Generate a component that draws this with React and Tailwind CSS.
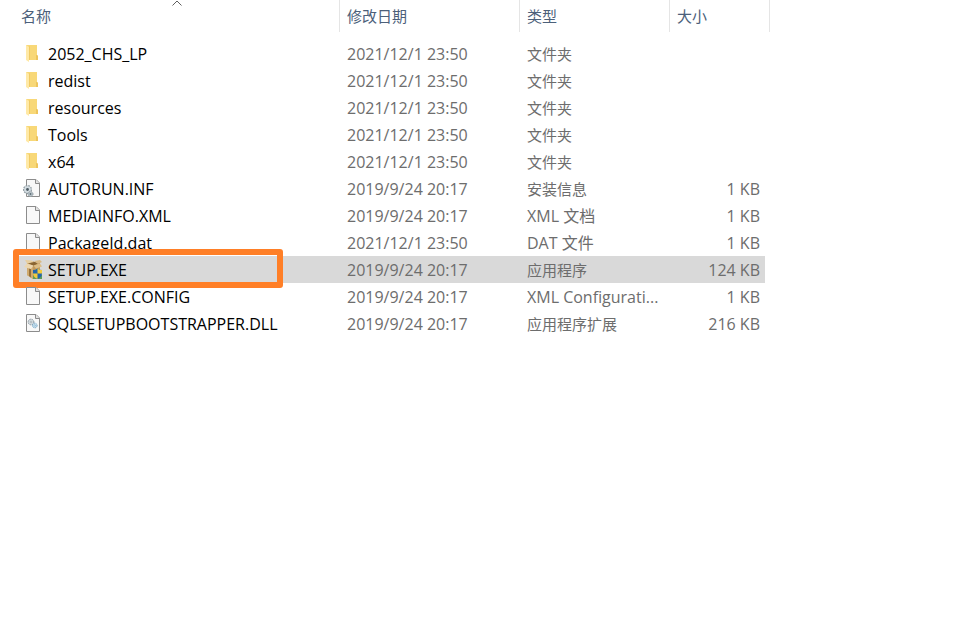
import React from 'react';

const files = [
  { name: '2052_CHS_LP', date: '2021/12/1 23:50', type: '文件夹', size: '', icon: 'folder' },
  { name: 'redist', date: '2021/12/1 23:50', type: '文件夹', size: '', icon: 'folder' },
  { name: 'resources', date: '2021/12/1 23:50', type: '文件夹', size: '', icon: 'folder' },
  { name: 'Tools', date: '2021/12/1 23:50', type: '文件夹', size: '', icon: 'folder' },
  { name: 'x64', date: '2021/12/1 23:50', type: '文件夹', size: '', icon: 'folder' },
  { name: 'AUTORUN.INF', date: '2019/9/24 20:17', type: '安装信息', size: '1 KB', icon: 'inf' },
  { name: 'MEDIAINFO.XML', date: '2019/9/24 20:17', type: 'XML 文档', size: '1 KB', icon: 'file' },
  { name: 'PackageId.dat', date: '2021/12/1 23:50', type: 'DAT 文件', size: '1 KB', icon: 'file' },
  { name: 'SETUP.EXE', date: '2019/9/24 20:17', type: '应用程序', size: '124 KB', icon: 'setup', selected: true },
  { name: 'SETUP.EXE.CONFIG', date: '2019/9/24 20:17', type: 'XML Configurati...', size: '1 KB', icon: 'file' },
  { name: 'SQLSETUPBOOTSTRAPPER.DLL', date: '2019/9/24 20:17', type: '应用程序扩展', size: '216 KB', icon: 'dll' },
];

function Page() {
  return (
    <>
      <path d="M3.5 1.5h9.500l3.500 3.500v13.500h-13z" fill="#f8f8f8" stroke="#8c8c8c" />
      <path d="M12.5 1.5v4h4" fill="#e3e3e3" stroke="#8c8c8c" />
    </>
  );
}

function FileIcon({ kind }) {
  return (
    <svg className="h-[21px] w-5 shrink-0" viewBox="0 0 20 21" aria-hidden="true">
      {kind === 'folder' && (
        <>
          <path d="M3 2h11v10l1 1v4H5z" fill="#f8d878" />
          <path d="M13 12h1l1 1v4h-2z" fill="#edc45c" />
          <path d="M6 3l1 .5v13.500H6z" fill="#f1cb66" />
          <path d="M3 2l3 2v15l-3-2z" fill="#ffe9a6" />
        </>
      )}
      {kind === 'file' && <Page />}
      {kind === 'inf' && (
        <>
          <Page />
          <circle cx="4.500" cy="11.500" r="3.800" fill="#c3ccd2" stroke="#8d999f" strokeWidth="1.500" strokeDasharray="1.6 1" />
          <circle cx="4.500" cy="11.500" r="3.200" fill="#d3dce1" />
          <circle cx="4.500" cy="11.500" r="1.400" fill="#4d5b63" />
          <circle cx="7.500" cy="16" r="2.500" fill="#b7c2c8" stroke="#8d999f" strokeDasharray="1.2 .8" />
          <circle cx="7.500" cy="16" r=".9" fill="#5d6e78" />
        </>
      )}
      {kind === 'dll' && (
        <>
          <Page />
          <circle cx="8" cy="9" r="2.8" fill="#dde4e8" stroke="#7f8d96" strokeDasharray="1.4 .6" />
          <circle cx="8" cy="9" r="1" fill="#fff" stroke="#8a969d" strokeWidth=".7" />
          <circle cx="11.8" cy="12.5" r="2.3" fill="#d5eaf7" stroke="#6a9fc0" strokeDasharray="1.2 .6" />
          <circle cx="11.8" cy="12.5" r=".8" fill="#fff" stroke="#6a9fc0" strokeWidth=".6" />
        </>
      )}
      {kind === 'setup' && (
        <>
          <path d="M4 4h13v12l-7 4-6-4z" fill="#c39a5c" />
          <path d="M4 5l6 3v12l-6-4z" fill="#d0aa6e" />
          <path d="M6 9l2 1v8.500l-2-1.500z" fill="#94703c" />
          <path d="M5 4l5-1.500 6 1.500-6 3z" fill="#8a6532" />
          <path d="M2 1l7 .5 2 1.500-7 1.500z" fill="#e8cf9f" />
          <path d="M11 2l6-1 2 2-4 2z" fill="#d9b984" />
          <path d="M4 4.500L1 8l7 2 2.500-3.500z" fill="#ecd7b0" />
          <path d="M10.500 6.500L17 4.500l2 3-6 2z" fill="#dcbd86" />
          <path d="M10 16h9v4h-9z" fill="#5c9c57" />
          <path d="M10 11q2.500 0 4.500-1.500 2 1.500 4.500 1.500v3.500q0 3.500-4.500 5.500-4.500-2-4.500-5.500z" fill="#2466ab" />
          <path d="M14.500 9.500q2 1.500 4.500 1.500v3.500h-4.500z" fill="#f2cb3d" />
          <path d="M10 14.500h4.500v5.500q-4.500-2-4.500-5.500z" fill="#f2cb3d" />
        </>
      )}
    </svg>
  );
}

const columns = [
  { label: '名称', span: 1 },
  { label: '修改日期', span: 1 },
  { label: '类型', span: 1 },
  { label: '大小', span: 2 },
];

export default function App() {
  return (
    <main className="min-h-screen overflow-x-auto bg-white pl-3.5 font-['Open_Sans','Noto_Sans_CJK_SC',sans-serif] text-base leading-[21px] text-[#6d6d6d]">
      <table className="w-[756px] table-fixed border-collapse text-left">
        <colgroup>
          <col className="w-[326px]" />
          <col className="w-[180px]" />
          <col className="w-[150px]" />
          <col className="w-[95px]" />
          <col className="w-[5px]" />
        </colgroup>
        <thead>
          <tr>
            {columns.map((c, i) => (
              <th key={c.label} colSpan={c.span} className="p-0 pb-2 font-normal" aria-sort={i === 0 ? 'ascending' : undefined}>
                <button type="button" className="relative block h-8 w-full border-r border-[#e5e5e5] pl-[7px] text-left text-[15px] leading-5 text-[#4c607a]">
                  {c.label}
                  {i === 0 && (
                    <svg className="absolute left-1/2 top-0 h-2 w-2.5 -translate-x-1/2" viewBox="0 0 10 8" fill="none" stroke="#5f5f5f" aria-hidden="true">
                      <path d="M.5 5.500l4.500-4.500 4.500 4.500" />
                    </svg>
                  )}
                </button>
              </th>
            ))}
          </tr>
        </thead>
        <tbody>
          {files.map((f) => {
            const bg = f.selected ? 'bg-[#d9d9d9]' : '';
            const typeSize = /[A-Z]/.test(f.type) ? 'pt-0.5 text-base leading-[21px]' : 'text-[15px] leading-5';
            return (
              <tr key={f.name} className="h-[27px]" aria-selected={f.selected ? true : undefined}>
                <td className={`relative p-0 pl-[9px] ${bg}`}>
                  <div className="flex items-center gap-[5px] whitespace-nowrap text-black">
                    <FileIcon kind={f.icon} />
                    <span className="pt-0.5">{f.name}</span>
                  </div>
                  {f.selected && (
                    <div className="pointer-events-none absolute -left-px -top-[7px] h-[39px] w-[270px] rounded-[3px] border-[6px] border-[#ff7f27]" />
                  )}
                </td>
                <td className={`p-0 pl-[7px] pt-0.5 ${bg}`}>{f.date}</td>
                <td className={`whitespace-nowrap p-0 pl-[7px] ${typeSize} ${bg}`}>{f.type}</td>
                <td className={`p-0 pr-[5px] pt-0.5 text-right ${bg}`}>{f.size}</td>
              </tr>
            );
          })}
        </tbody>
      </table>
    </main>
  );
}
